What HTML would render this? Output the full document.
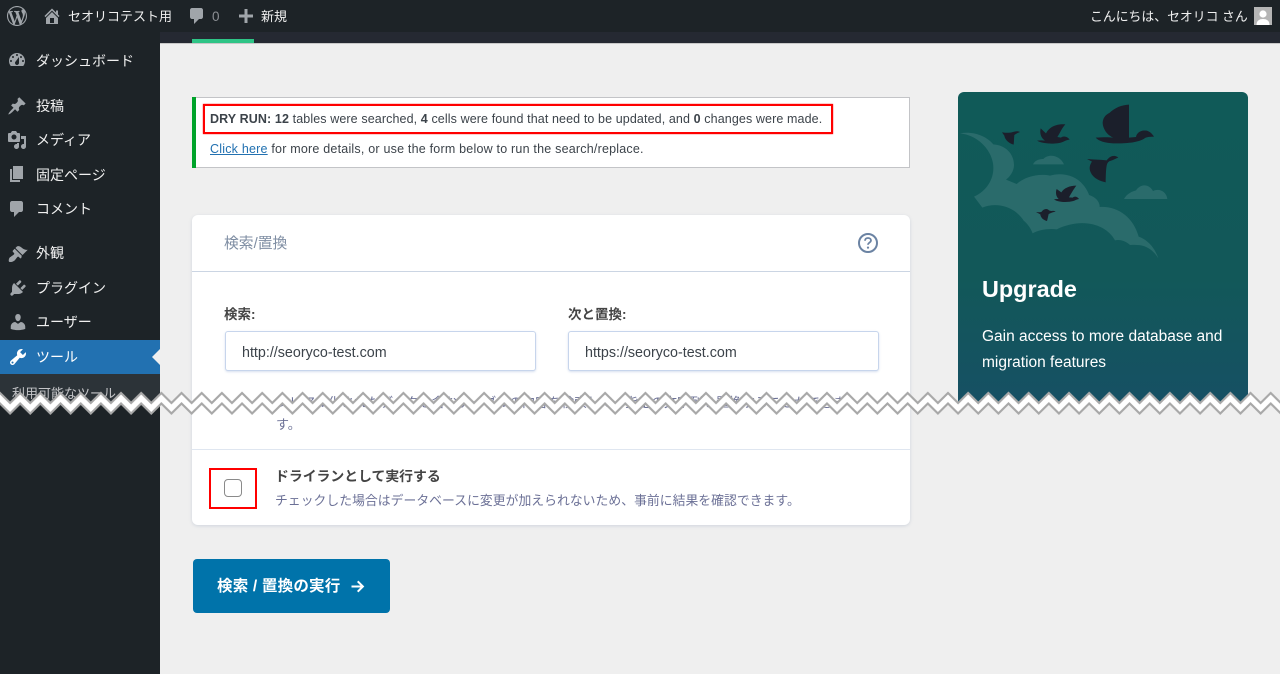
<!DOCTYPE html>
<html lang="ja"><head><meta charset="utf-8"><title>検索/置換</title>
<style>
html,body{margin:0;padding:0;width:1280px;height:674px;overflow:hidden;background:#efefef}
body{position:relative;font-family:"Liberation Sans","Noto Sans CJK JP",sans-serif;font-size:13px;color:#3c434a}
.a{position:absolute}
.t{position:absolute;white-space:nowrap;line-height:20px;height:20px}
.m{color:#f0f0f0;font-size:14px;left:36px;margin-top:1px}
.i{position:absolute;fill:#a0a5aa}
</style></head><body>
<div class="a" style="left:160px;top:44px;width:1120px;height:630px;background:#efefef"></div>
<div class="a" style="left:160px;top:32px;width:1120px;height:11px;background:#252932"></div>
<div class="a" style="left:160px;top:43px;width:1120px;height:1px;background:#c8c8c8"></div>
<div class="a" style="left:192px;top:39px;width:62px;height:4px;background:#2ec486"></div>
<div class="a" style="left:0;top:0;width:1280px;height:32px;background:#1d2327"></div>
<div class="a" style="left:0;top:32px;width:160px;height:642px;background:#1d2327"></div>

<!-- admin bar -->
<svg class="i" style="left:7px;top:6px" width="20" height="20" viewBox="0 0 20 20"><path d="M20 10c0-5.51-4.49-10-10-10C4.48 0 0 4.49 0 10c0 5.52 4.48 10 10 10 5.51 0 10-4.48 10-10zM7.78 15.37L4.37 6.22c.55-.02 1.17-.08 1.17-.08.5-.06.44-1.13-.06-1.11 0 0-1.45.11-2.37.11-.18 0-.37 0-.58-.01C4.12 2.69 6.87 1.11 10 1.11c2.33 0 4.45.87 6.05 2.34-.68-.11-1.65.39-1.65 1.58 0 .74.45 1.36.9 2.1.35.61.55 1.36.55 2.46 0 1.49-1.4 5-1.4 5l-3.03-8.37c.54-.02.82-.17.82-.17.5-.05.44-1.25-.06-1.22 0 0-1.44.12-2.38.12-.87 0-2.33-.12-2.33-.12-.5-.03-.56 1.2-.06 1.22l.92.08 1.26 3.41zM17.41 10c.24-.64.74-1.87.43-4.25.7 1.29 1.05 2.71 1.05 4.25 0 3.29-1.73 6.24-4.4 7.78.97-2.59 1.94-5.2 2.92-7.78zM6.1 18.09C3.12 16.65 1.11 13.53 1.11 10c0-1.3.23-2.48.72-3.59C3.25 10.3 4.67 14.2 6.1 18.09zm4.03-6.63l2.58 6.98c-.86.29-1.76.45-2.71.45-.79 0-1.57-.11-2.29-.33.81-2.38 1.62-4.74 2.42-7.1z"/></svg>
<svg class="i" style="left:42px;top:6px" width="20" height="20" viewBox="0 0 20 20"><path fill-rule="evenodd" d="M16 8.5l1.53 1.53-1.06 1.06L10 4.62l-6.47 6.47-1.06-1.06L10 2.5l4 4v-2h2v4zm-6-2.46l6 5.99V18H4v-5.97zM12 17v-5H8v5h4z"/></svg>
<div class="t" style="left:68px;top:7px;color:#f0f0f0;font-size:13px">セオリコテスト用</div>
<svg class="i" style="left:187px;top:6px" width="20" height="20" viewBox="0 0 20 20"><path d="M5 2h9c1.1 0 2 .9 2 2v7c0 1.1-.9 2-2 2h-2l-5 5v-5H5c-1.1 0-2-.9-2-2V4c0-1.1.9-2 2-2z"/></svg>
<div class="t" style="left:212px;top:7px;color:#8c8f94;font-size:13.5px">0</div>
<svg class="i" style="left:236px;top:6px" width="20" height="20" viewBox="0 0 20 20"><path d="M17 8.5h-5.5V3h-3v5.5H3v3h5.5V17h3v-5.5H17z"/></svg>
<div class="t" style="left:261px;top:7px;color:#f0f0f0;font-size:13px">新規</div>
<div class="t" style="left:1090px;top:7px;color:#f0f0f0;font-size:12.85px">こんにちは、セオリコ さん</div>
<svg class="a" style="left:1254px;top:7px" width="18" height="18" viewBox="0 0 18 18"><rect width="18" height="18" fill="#b5b5b5"/><circle cx="9" cy="7" r="3.6" fill="#fff"/><path d="M2.5 18c0-4.5 3-6 6.500-6s6.500 1.500 6.500 6z" fill="#fff"/></svg>

<!-- sidebar -->
<svg class="i" style="left:7px;top:50px" width="20" height="20" viewBox="0 0 20 20"><path fill-rule="evenodd" d="M3.76 16h12.48c1.100-1.370 1.760-3.110 1.760-5 0-4.420-3.580-8-8-8s-8 3.580-8 8c0 1.890.660 3.630 1.760 5zM10 4c.55 0 1 .45 1 1s-.45 1-1 1-1-.45-1-1 .45-1 1-1zM6 6c.55 0 1 .45 1 1s-.45 1-1 1-1-.45-1-1 .45-1 1-1zm8 0c.55 0 1 .45 1 1s-.45 1-1 1-1-.45-1-1 .45-1 1-1zm-5.370 5.550L12 7v6c0 1.100-.9 2-2 2s-2-.9-2-2c0-.57.24-1.080.63-1.450zM4 10c.55 0 1 .45 1 1s-.45 1-1 1-1-.45-1-1 .45-1 1-1zm12 0c.55 0 1 .45 1 1s-.45 1-1 1-1-.45-1-1 .45-1 1-1z"/></svg>
<div class="t m" style="top:50px">ダッシュボード</div>
<svg class="i" style="left:7px;top:96px" width="20" height="20" viewBox="0 0 20 20"><path d="M10.44 3.020l1.820-1.820 6.360 6.350-1.830 1.820c-1.050-.68-2.480-.57-3.410.36l-.75.75c-.92.93-1.040 2.350-.35 3.410l-1.830 1.820-2.410-2.410-2.800 2.790c-.42.42-3.380 2.710-3.800 2.290s1.860-3.390 2.280-3.810l2.790-2.790L4.100 9.360l1.830-1.820c1.050.69 2.480.57 3.400-.36l.75-.75c.93-.92 1.050-2.350.36-3.410z"/></svg>
<div class="t m" style="top:95px">投稿</div>
<svg class="i" style="left:7px;top:130px" width="20" height="20" viewBox="0 0 20 20"><path fill-rule="evenodd" d="M13 11V4c0-.55-.45-1-1-1h-1.670L9 1H5L3.670 3H2c-.55 0-1 .45-1 1v7c0 .55.45 1 1 1h10c.55 0 1-.45 1-1zM7 4.500c1.380 0 2.500 1.120 2.500 2.500S8.380 9.500 7 9.500 4.500 8.380 4.500 7 5.620 4.500 7 4.500zM14 6h5v10.500c0 1.380-1.120 2.500-2.500 2.500S14 17.880 14 16.500s1.120-2.500 2.500-2.500c.17 0 .34.02.5.05V9h-3V6zm-4 8.050V13h2v3.500c0 1.380-1.120 2.500-2.500 2.500S7 17.880 7 16.500 8.120 14 9.500 14c.17 0 .34.02.5.05z"/></svg>
<div class="t m" style="top:129px">メディア</div>
<svg class="i" style="left:7px;top:164px" width="20" height="20" viewBox="0 0 20 20"><path d="M6 15V2h10v13H6zm-1 1h8v2H3V5h2v11z"/></svg>
<div class="t m" style="top:164px">固定ページ</div>
<svg class="i" style="left:7px;top:199px" width="20" height="20" viewBox="0 0 20 20"><path d="M5 2h9c1.100 0 2 .9 2 2v7c0 1.100-.9 2-2 2h-2l-5 5v-5H5c-1.100 0-2-.9-2-2V4c0-1.100.9-2 2-2z"/></svg>
<div class="t m" style="top:198px">コメント</div>
<svg class="i" style="left:8px;top:244px" width="20" height="20" viewBox="0 0 20 20"><path d="M14.480 11.060L7.410 3.990l1.500-1.500c.5-.56 2.300-.47 3.510.32 1.210.8 1.430 1.280 2.910 2.100 1.180.64 2.450 1.260 4.450.85zm-.71.71L6.700 4.700 4.930 6.470c-.39.39-.39 1.020 0 1.410l1.060 1.060c.39.39.39 1.030 0 1.420-.6.6-1.430 1.110-2.210 1.690-.35.26-.7.53-1.010.84C1.430 13.230.76 14.750.76 17c0 .55.45 1 1 1 2.250 0 3.770-.67 5.120-1.810.32-.31.59-.66.85-1.010.58-.78 1.080-1.610 1.690-2.210.39-.39 1.020-.39 1.410 0l1.060 1.060c.39.39 1.020.39 1.410 0z"/></svg>
<div class="t m" style="top:242px">外観</div>
<svg class="i" style="left:8px;top:278px" width="20" height="20" viewBox="0 0 20 20"><path d="M13.110 4.360L9.870 7.600 8 5.730l3.240-3.240c.35-.34 1.050-.2 1.560.32.52.51.66 1.210.31 1.550zm-8 1.770l.91-1.120 9.010 9.010-1.190.84c-.71.71-2.630 1.160-3.820 1.160H6.140L4.900 17.260c-.59.59-1.540.59-2.120 0-.59-.58-.59-1.530 0-2.120l1.240-1.240v-3.880c0-1.130.4-3.190 1.090-3.890zm7.260 3.970l3.240-3.240c.34-.35 1.040-.21 1.550.31.52.51.66 1.210.31 1.550l-3.240 3.250z"/></svg>
<div class="t m" style="top:277px">プラグイン</div>
<svg class="i" style="left:8px;top:312px" width="20" height="20" viewBox="0 0 20 20"><path d="M10 9.250c-2.270 0-2.730-3.440-2.730-3.440C7 4.020 7.820 2 9.970 2c2.160 0 2.980 2.020 2.710 3.810 0 0-.41 3.440-2.680 3.440zm0 2.570L12.720 10c2.390 0 4.520 2.330 4.520 4.530v2.490s-3.650 1.130-7.240 1.130c-3.650 0-7.240-1.130-7.240-1.130v-2.490c0-2.250 1.940-4.480 4.470-4.480z"/></svg>
<div class="t m" style="top:311px">ユーザー</div>
<div class="a" style="left:0;top:340px;width:160px;height:34px;background:#2271b1"></div>
<svg class="a" style="left:152px;top:349px" width="8" height="16" viewBox="0 0 8 16"><path d="M8 0v16L0 8z" fill="#f0f0f0"/></svg>
<svg class="i" style="left:8px;top:347px;fill:#fff" width="20" height="20" viewBox="0 0 20 20"><path fill-rule="evenodd" d="M16.680 9.770c-1.340 1.340-3.300 1.670-4.950.99l-5.410 6.520c-.99.99-2.590.99-3.580 0s-.99-2.590 0-3.570l6.520-5.420c-.68-1.650-.35-3.610.99-4.950 1.280-1.280 3.120-1.620 4.720-1.060l-2.890 2.890 2.820 2.820 2.860-2.870c.53 1.580.18 3.390-1.080 4.650zM3.810 16.210c.4.39 1.040.39 1.430 0 .4-.4.4-1.040 0-1.430-.39-.4-1.030-.4-1.430 0-.39.39-.39 1.030 0 1.430z"/></svg>
<div class="t m" style="top:346px;color:#fff">ツール</div>
<div class="a" style="left:0;top:374px;width:160px;height:30px;background:#2c3338"></div>
<div class="t" style="left:12px;top:384px;color:#c3c4c7;font-size:13px">利用可能なツール</div>

<!-- notice -->
<div class="a" style="left:192px;top:97px;width:717px;height:69px;background:#fff;border:1px solid #c3c4c7;border-left:0;box-sizing:content-box"></div>
<div class="a" style="left:192px;top:97px;width:4px;height:71px;background:#00a32a"></div>
<div class="a" style="left:203px;top:104px;width:626px;height:26px;border:2px solid #f00;box-shadow:0 0 1px #f00"></div>
<div class="t" style="left:210px;top:109px;font-size:12.5px;color:#3c434a;letter-spacing:.11px"><b>DRY RUN:</b> <b>12</b> tables were searched, <b>4</b> cells were found that need to be updated, and <b>0</b> changes were made.</div>
<div class="t" style="left:210px;top:139px;font-size:12.5px;color:#3c434a;letter-spacing:.21px"><span style="color:#2271b1;text-decoration:underline">Click here</span> for more details, or use the form below to run the search/replace.</div>

<!-- card -->
<div class="a" style="left:192px;top:215px;width:718px;height:310px;background:#fff;border-radius:6px;box-shadow:0 1px 3px rgba(120,140,170,.25)"></div>
<div class="a" style="left:192px;top:271px;width:718px;height:1px;background:#cbd5e3"></div>
<div class="t" style="left:224px;top:234px;font-size:14.8px;color:#7f8ea3">検索/置換</div>
<svg class="a" style="left:857px;top:232px" width="22" height="22" viewBox="0 0 22 22"><circle cx="11" cy="11" r="9" fill="none" stroke="#6b83a3" stroke-width="2"/><path d="M8 8.700c0-1.700 1.300-2.700 3-2.700s3 1 3 2.500c0 2-3 2.200-3 4.300" fill="none" stroke="#6b83a3" stroke-width="1.800"/><circle cx="11" cy="15.600" r="1.100" fill="#6b83a3"/></svg>
<div class="t" style="left:224px;top:305px;font-size:13.5px;font-weight:700;color:#444">検索:</div>
<div class="t" style="left:568px;top:305px;font-size:13.5px;font-weight:700;color:#444">次と置換:</div>
<div class="a" style="left:225px;top:331px;width:309px;height:38px;border:1px solid #c7d5ec;border-radius:3px;box-shadow:0 1px 2px rgba(120,150,200,.3);background:#fff"></div>
<div class="a" style="left:568px;top:331px;width:309px;height:38px;border:1px solid #c7d5ec;border-radius:3px;box-shadow:0 1px 2px rgba(120,150,200,.3);background:#fff"></div>
<div class="t" style="left:242px;top:343px;font-size:14.3px;color:#3c434a">http://seoryco-test.com</div>
<div class="t" style="left:585px;top:343px;font-size:14.3px;color:#3c434a">https://seoryco-test.com</div>
<div class="t" style="left:276px;top:393px;font-size:13px;color:#6b7096">シリアル化されたデータを含むテーブルの内容を検索して、指定の文字列を置換することができま</div>
<div class="t" style="left:276px;top:415px;font-size:13px;color:#6b7096">す。</div>
<div class="a" style="left:192px;top:449px;width:718px;height:1px;background:#dfe6f0"></div>
<div class="a" style="left:209px;top:468px;width:44px;height:37px;border:2px solid #f00"></div>
<div class="a" style="left:224px;top:479px;width:16px;height:16px;border:1px solid #8a8a8a;border-radius:4px;background:#fff"></div>
<div class="t" style="left:275px;top:466px;font-size:13.85px;font-weight:700;color:#444">ドライランとして実行する</div>
<div class="t" style="left:275px;top:491px;font-size:12.8px;letter-spacing:.05px;color:#6b7096">チェックした場合はデータベースに変更が加えられないため、事前に結果を確認できます。</div>

<!-- button -->
<div class="a" style="left:193px;top:559px;width:197px;height:54px;background:#0073aa;border-radius:4px"></div>
<div class="t" style="left:217px;top:577px;font-size:15.5px;letter-spacing:.2px;font-weight:700;color:#fff">検索 / 置換の実行</div>
<svg class="a" style="left:350px;top:579px" width="15" height="15" viewBox="0 0 15 15"><path d="M1.500 7.500h11M7.700 2.300l5.200 5.200-5.200 5.200" fill="none" stroke="#fff" stroke-width="2"/></svg>

<!-- upgrade panel -->
<div class="a" style="left:958px;top:92px;width:290px;height:312px;border-radius:6px 6px 0 0;background:linear-gradient(180deg,#105a58 0%,#125859 60%,#165064 100%);overflow:hidden"></div>
<svg class="a" style="left:950px;top:85px" width="330" height="190" viewBox="0 0 990 570">
<path fill="#2a6b6b" d="M30 145C75 138 110 155 130 178C165 180 192 205 192 240C192 258 180 275 168 284L200 297C225 275 265 265 300 272C330 262 375 268 400 300C410 312 416 325 417 330C435 335 450 350 449 366C500 362 550 395 566 455C595 465 615 490 625 520C600 480 570 478 540 480C525 465 505 463 495 466C470 420 400 395 320 433C295 430 265 435 248 445C240 425 230 415 221 407C195 365 140 350 97 368L72 335C115 315 135 275 129 235C122 190 80 150 30 145Z"/>
<path fill="#2a6b6b" d="M249 238C255 225 270 222 280 222C295 205 330 210 342 238Z"/>
<path fill="#2a6b6b" d="M522 342C530 325 550 318 558 316C575 292 600 300 609 318C630 308 650 322 652 342Z"/>
<g fill="#1b1f2b">
<path d="M437 158C465 156 480 157 490 158C470 150 458 130 458 112C460 95 470 88 478 84C495 68 515 60 537 59L537 158L558 156C560 142 575 134 590 137C600 140 606 146 612 155C600 156 595 155 585 159C570 172 530 176 490 175C465 174 445 168 437 158Z"/>
<path d="M411 222C430 224 450 224 470 226C480 212 495 208 505 218C495 221 490 226 480 228C470 232 468 240 467 292C450 288 430 280 422 262C416 250 420 238 426 230Z"/>
<path d="M261 167C270 166 278 166 285 167C275 160 268 148 272 130L288 145C298 125 320 116 346 118C335 130 328 148 322 156L333 158C340 152 352 154 359 164C350 165 345 168 338 171C320 178 280 178 261 167Z"/>
<path d="M156 142C165 143 172 144 180 143C190 142 198 135 210 141C203 144 198 146 193 150C192 160 192 170 191 179C178 176 165 165 163 152Z"/>
<path d="M312 343C318 342 322 342 326 342C318 335 316 322 320 312L334 322C342 310 358 302 379 302C370 314 362 328 357 337L368 338C374 332 382 335 387 342C380 343 376 346 370 348C355 352 325 353 312 343Z"/>
<path d="M258 381C265 382 270 382 274 381C280 372 290 369 296 375C302 381 310 375 317 380C310 381 303 384 296 387C294 395 293 402 291 408C280 405 272 398 271 388Z"/>
</g>
</svg>
<div class="t" style="left:982px;top:274px;height:30px;line-height:30px;font-size:23.4px;font-weight:700;color:#fff">Upgrade</div>
<div class="t" style="left:982px;top:327px;font-size:15.5px;color:#fff">Gain access to more database and</div>
<div class="t" style="left:982px;top:353px;font-size:15.5px;color:#fff">migration features</div>

<!-- torn edge -->
<svg class="a" style="left:0;top:390px" width="1280" height="26" viewBox="0 0 1280 26">
<defs><pattern id="z" width="20.17" height="26" patternUnits="userSpaceOnUse">
<path d="M-10.085 13L0 3L10.085 13L20.17 3L30.255 13V23.500L20.17 13.500L10.085 23.500L0 13.500L-10.085 23.500Z" fill="#fff"/>
<path d="M-10.085 13L0 3L10.085 13L20.17 3L30.255 13M-10.085 23.500L0 13.500L10.085 23.500L20.17 13.500L30.255 23.500" fill="none" stroke="#a8a8a8" stroke-width="2.2"/>
</pattern></defs>
<rect width="1280" height="26" fill="url(#z)"/>
</svg>
</body></html>
